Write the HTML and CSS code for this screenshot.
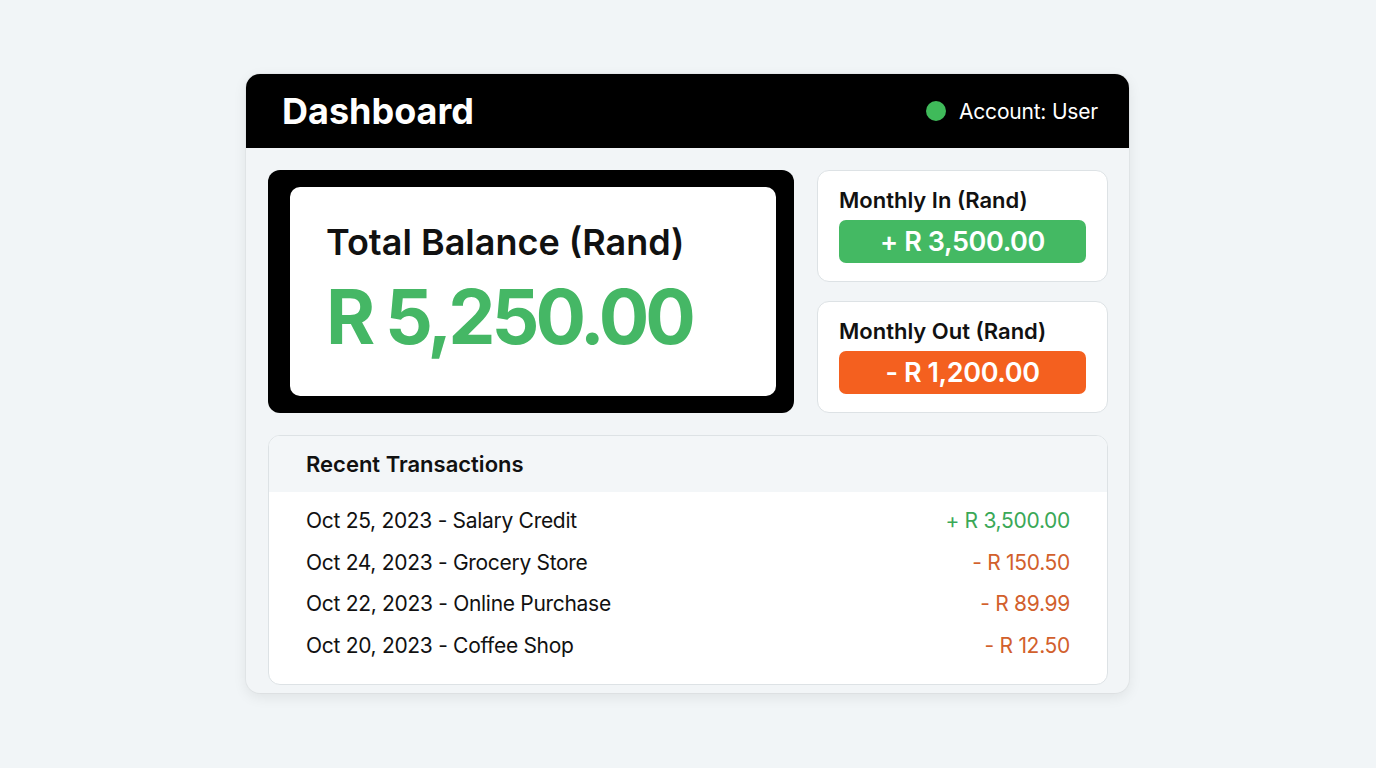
FILE: index.html
```html
<!DOCTYPE html>
<html>
<head>
<meta charset="utf-8">
<link rel="stylesheet" href="styles.css">
</head>
<body>
<div class="page">
  <div class="card">
    <header class="topbar">
      <h1 class="title">Dashboard</h1>
      <div class="account"><span class="dot"></span><span>Account: User</span></div>
    </header>
    <div class="body">
      <div class="top-row">
        <div class="balance">
          <div class="balance-inner">
            <div class="balance-label">Total Balance (Rand)</div>
            <div class="balance-value">R 5,250.00</div>
          </div>
        </div>
        <div class="side">
          <div class="mini">
            <div class="mini-label">Monthly In (Rand)</div>
            <div class="pill pill-in">+ R 3,500.00</div>
          </div>
          <div class="mini">
            <div class="mini-label">Monthly Out (Rand)</div>
            <div class="pill pill-out">- R 1,200.00</div>
          </div>
        </div>
      </div>
      <div class="tx">
        <div class="tx-head">Recent Transactions</div>
        <ul class="tx-list">
          <li class="tx-row"><span>Oct 25, 2023 - Salary Credit</span><span class="amt in">+ R 3,500.00</span></li>
          <li class="tx-row"><span>Oct 24, 2023 - Grocery Store</span><span class="amt out">- R 150.50</span></li>
          <li class="tx-row"><span>Oct 22, 2023 - Online Purchase</span><span class="amt out">- R 89.99</span></li>
          <li class="tx-row"><span>Oct 20, 2023 - Coffee Shop</span><span class="amt out">- R 12.50</span></li>
        </ul>
      </div>
    </div>
  </div>
</div>
</body>
</html>
```

FILE: styles.css
```css
* { box-sizing: border-box; }
html, body {
  margin: 0;
  padding: 0;
  background: #f1f5f7;
  font-family: Inter, "Liberation Sans", sans-serif;
  color: #111;
}
.page {
  width: 1376px;
  height: 768px;
  padding-top: 74px;
  padding-left: 246px;
}
.card {
  width: 883px;
  height: 619px;
  border-radius: 14px;
  background: #f2f5f7;
  box-shadow: 0 4px 14px rgba(0, 0, 0, 0.08), 0 0 0 1px rgba(0,0,0,0.03);
  overflow: hidden;
}
.topbar {
  height: 74px;
  background: #000;
  display: flex;
  align-items: center;
  justify-content: space-between;
  padding: 0 31px 0 36px;
}
.title {
  margin: 0;
  color: #fff;
  font-size: 36px;
  font-weight: 700;
  letter-spacing: 0;
}
.account {
  display: flex;
  align-items: center;
  gap: 13px;
  color: #fff;
  font-size: 21px;
  letter-spacing: -0.2px;
}
.dot {
  width: 20px;
  height: 20px;
  border-radius: 50%;
  background: #3fba5a;
}
.body {
  padding: 22px 21px 8px 22px;
}
.top-row {
  display: flex;
  gap: 23px;
  height: 243px;
}
.balance {
  width: 526px;
  background: #000;
  border-radius: 12px;
  padding: 17px 18px 17px 22px;
}
.balance-inner {
  height: 100%;
  background: #fff;
  border-radius: 10px;
  padding: 33px 0 0 36px;
}
.balance-label {
  font-size: 36px;
  font-weight: 600;
  letter-spacing: 0;
  line-height: 44px;
}
.balance-value {
  margin-top: 10px;
  font-size: 75px;
  font-weight: 700;
  color: #45b765;
  letter-spacing: -4px;
  line-height: 86px;
}
.side {
  flex: 1;
  display: flex;
  flex-direction: column;
  gap: 19px;
}
.mini {
  height: 112px;
  background: #fff;
  border: 1px solid #dde2e5;
  border-radius: 12px;
  padding: 14px 21px 0 21px;
}
.mini-label {
  font-size: 22px;
  font-weight: 600;
  letter-spacing: 0;
  line-height: 30px;
}
.pill {
  margin-top: 5px;
  height: 43px;
  border-radius: 7px;
  color: #fff;
  font-size: 27px;
  font-weight: 600;
  letter-spacing: -0.4px;
  display: flex;
  align-items: center;
  justify-content: center;
}
.pill-in { background: #44b963; }
.pill-out { background: #f4601f; }
.tx {
  margin-top: 22px;
  height: 250px;
  background: #fff;
  border: 1px solid #dde2e5;
  border-radius: 12px;
  overflow: hidden;
}
.tx-head {
  height: 56px;
  background: #f3f6f8;
  padding-left: 37px;
  display: flex;
  align-items: center;
  font-size: 22px;
  font-weight: 600;
  letter-spacing: 0;
}
.tx-list {
  list-style: none;
  margin: 0;
  padding: 8px 37px 0 37px;
}
.tx-row {
  height: 41.5px;
  display: flex;
  align-items: center;
  justify-content: space-between;
  font-size: 21px;
  letter-spacing: -0.3px;
}
.amt { font-size: 21px; letter-spacing: -0.3px; }
.amt.in { color: #3aa857; }
.amt.out { color: #d2602c; }
```
